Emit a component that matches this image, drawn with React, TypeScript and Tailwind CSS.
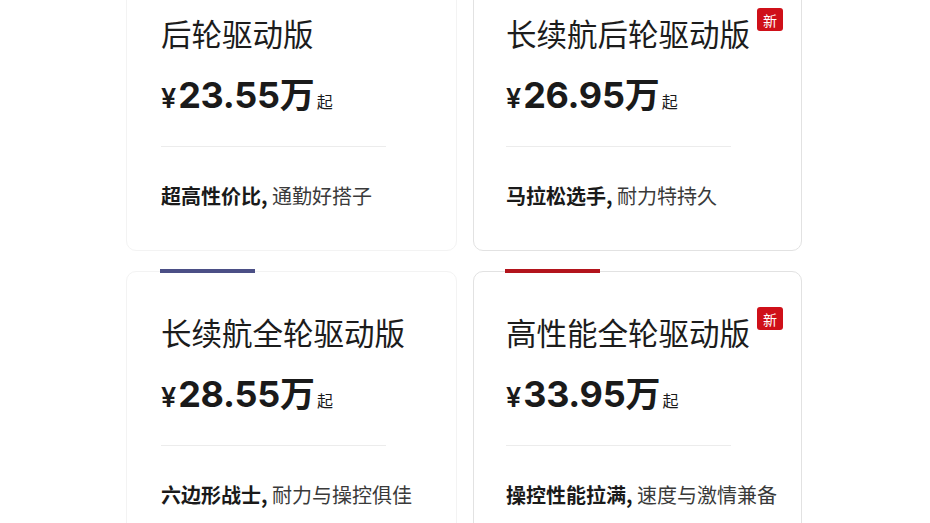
const trims = [
  {
    name: "后轮驱动版",
    price: "23.55",
    strong: "超高性价比,",
    rest: "通勤好搭子",
    isNew: false,
    accent: "",
    muted: true,
  },
  {
    name: "长续航后轮驱动版",
    price: "26.95",
    strong: "马拉松选手,",
    rest: "耐力特持久",
    isNew: true,
    accent: "",
    muted: false,
  },
  {
    name: "长续航全轮驱动版",
    price: "28.55",
    strong: "六边形战士,",
    rest: "耐力与操控俱佳",
    isNew: false,
    accent: "bg-[#4b4f86]",
    muted: true,
  },
  {
    name: "高性能全轮驱动版",
    price: "33.95",
    strong: "操控性能拉满,",
    rest: "速度与激情兼备",
    isNew: true,
    accent: "bg-[#b3141c]",
    muted: false,
  },
];

function TrimCard({ trim }: { trim: (typeof trims)[number] }) {
  return (
    <div
      className={`relative rounded-[10px] border bg-white pt-[40px] pb-[39px] ${
        trim.muted ? "border-[#f3f3f3] pl-[34px]" : "border-[#e2e2e2] pl-[32px]"
      }`}
    >
      {trim.accent && (
        <div className={`absolute -top-[3px] h-[4px] w-[95px] ${trim.muted ? "left-[33px]" : "left-[31px]"} ${trim.accent}`} />
      )}

      {/* Title */}
      <div className="flex items-start">
        <h2 className="text-[30.5px] leading-[40px] font-normal text-[#1c1c1c]">{trim.name}</h2>
        {trim.isNew && (
          <span className="ml-[7px] -mt-[5px] flex h-[23px] w-[26px] items-center justify-center rounded-[3px] bg-[#cf1019] text-[14px] leading-none text-white">
            新
          </span>
        )}
      </div>

      {/* Price */}
      <div className="mt-[14px] flex h-[40px] items-baseline font-['Inter','Noto_Sans_CJK_SC',sans-serif] text-[#1a1a1a]">
        <span className="text-[27px] font-semibold">¥</span>
        <span className="ml-[2px] text-[36px] font-bold tracking-[-0.3px]">{trim.price}</span>
        <span className="text-[35px] font-bold font-['Noto_Sans_CJK_SC',sans-serif]">万</span>
        <span className="ml-[2px] text-[16px] font-['Noto_Sans_CJK_SC',sans-serif]">起</span>
      </div>

      <div className="mt-[39px] h-px w-[225px] bg-[#ececec]" />

      {/* Tagline */}
      <p className="mt-[34px] text-[20px] leading-[30px]">
        <span className="font-bold text-[#1a1a1a]">{trim.strong}</span>
        <span className="text-[#3a3a3a]"> {trim.rest}</span>
      </p>
    </div>
  );
}

export default function App() {
  return (
    <div className="h-screen overflow-hidden bg-white font-['Noto_Sans_CJK_SC','Noto_Sans',sans-serif]">
      <div className="-mt-[28px] flex justify-center">
        <div className="grid grid-cols-[331px_329px] gap-x-[16px] gap-y-[20px] translate-x-[-1px]">
          {trims.map((t) => (
            <TrimCard key={t.name} trim={t} />
          ))}
        </div>
      </div>
    </div>
  );
}
